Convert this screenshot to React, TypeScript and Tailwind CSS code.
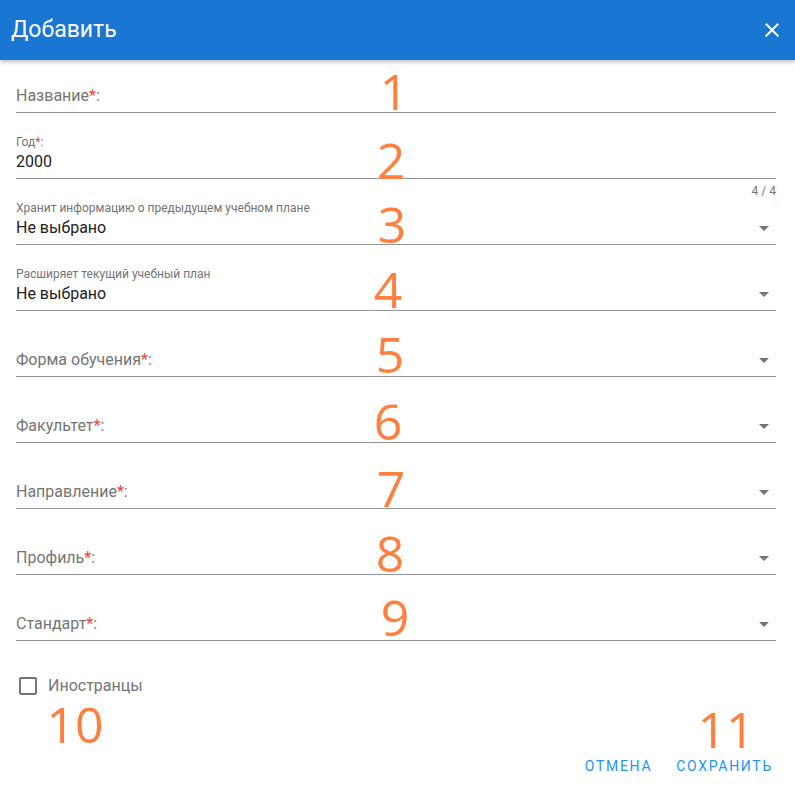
import React from 'react'

type FieldProps = {
  label: string
  required?: boolean
  value?: string
  select?: boolean
  first?: boolean
  counter?: string
}

function Req() {
  return <span className="text-[#f44336]">*</span>
}

function Arrow() {
  return (
    <svg width="24" height="24" viewBox="0 0 24 24" className="shrink-0 fill-[#757575]">
      <path d="M7 10l5 5 5-5z" />
    </svg>
  )
}

function Field({ label, required, value, select, first, counter }: FieldProps) {
  return (
    <div
      className={`relative flex items-end border-b border-[#949494] pb-[4px] ${first ? 'h-[53px]' : 'h-[66px]'}`}
    >
      <div className="flex-1 min-w-0">
        {value !== undefined ? (
          <>
            <div className="text-[12px] leading-[16px] text-[#757575]">
              {label}
              {required && <Req />}
              {required && ':'}
            </div>
            <div className="text-[16px] leading-[24px] text-[#212121]">{value}</div>
          </>
        ) : (
          <div className="text-[16px] leading-[24px] text-[#757575]">
            {label}
            {required && <Req />}
            {required && ':'}
          </div>
        )}
      </div>
      {select && <Arrow />}
      {counter && (
        <div className="absolute right-0 top-[calc(100%+5px)] text-[12px] leading-[16px] text-[#757575]">
          {counter}
        </div>
      )}
    </div>
  )
}

// orange annotation numbers over the form
const marks = [
  { n: '1', cls: 'top-[72px] left-[364px] w-[60px]' },
  { n: '2', cls: 'top-[141px] left-[361px] w-[60px]' },
  { n: '3', cls: 'top-[205px] left-[362px] w-[60px]' },
  { n: '4', cls: 'top-[270px] left-[358px] w-[60px]' },
  { n: '5', cls: 'top-[335px] left-[360px] w-[60px]' },
  { n: '6', cls: 'top-[402px] left-[358px] w-[60px]' },
  { n: '7', cls: 'top-[469px] left-[361px] w-[60px]' },
  { n: '8', cls: 'top-[534px] left-[360px] w-[60px]' },
  { n: '9', cls: 'top-[598px] left-[365px] w-[60px]' },
  { n: '10', cls: 'top-[705px] left-[35px] w-[80px]' },
  { n: '11', cls: 'top-[710px] left-[686px] w-[80px]' },
]

export default function App() {
  return (
    <div className="relative w-full h-[789px] overflow-hidden bg-white font-['Roboto','Liberation_Sans',sans-serif]">
      {/* Header */}
      <div className="relative z-10 flex h-[60px] items-center justify-between bg-[#1976d2] pl-[11px] pr-[11px] shadow-[0_2px_4px_rgba(0,0,0,0.25)]">
        <div className="text-[23px] leading-[30px] text-white">Добавить</div>
        <svg width="24" height="24" viewBox="0 0 24 24" className="fill-white">
          <path d="M19 6.41L17.59 5 12 10.59 6.41 5 5 6.41 10.59 12 5 17.59 6.41 19 12 13.41 17.59 19 19 17.59 13.41 12z" />
        </svg>
      </div>

      {/* Form */}
      <div className="pl-4 pr-[19px]">
        <Field first label="Название" required />
        <Field label="Год" required value="2000" counter="4 / 4" />
        <Field label="Хранит информацию о предыдущем учебном плане" value="Не выбрано" select />
        <Field label="Расширяет текущий учебный план" value="Не выбрано" select />
        <Field label="Форма обучения" required select />
        <Field label="Факультет" required select />
        <Field label="Направление" required select />
        <Field label="Профиль" required select />
        <Field label="Стандарт" required select />

        <div className="mt-[33px] flex h-[24px] items-center">
          <div className="flex h-[24px] w-[24px] items-center justify-center">
            <div className="h-[18px] w-[18px] rounded-[2px] border-2 border-[#757575]" />
          </div>
          <span className="ml-[8px] text-[16px] leading-[24px] text-[#757575]">Иностранцы</span>
        </div>
      </div>

      {/* Actions */}
      <div className="mt-[50px] flex justify-end gap-2 pr-[14px]">
        <button className="h-[36px] px-2 text-[14px] uppercase tracking-[1.7px] text-[#2196f3]">Отмена</button>
        <button className="h-[36px] px-2 text-[14px] uppercase tracking-[1.7px] text-[#2196f3]">Сохранить</button>
      </div>

      {marks.map((m) => (
        <div
          key={m.n}
          className={`absolute z-20 text-center text-[50px] leading-[38px] text-[#ff7f3f] font-['Open_Sans',sans-serif] ${m.cls}`}
        >
          {m.n}
        </div>
      ))}
    </div>
  )
}
